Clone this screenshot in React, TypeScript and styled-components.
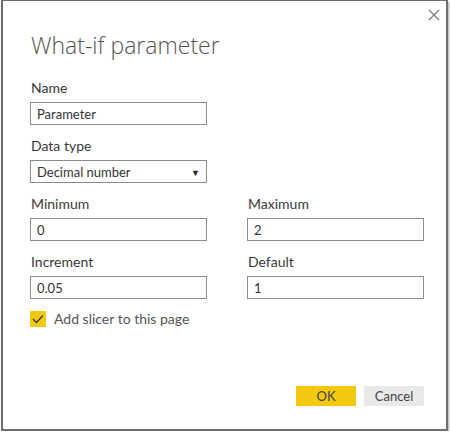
import styled, { createGlobalStyle } from 'styled-components'

const GlobalStyle = createGlobalStyle`
  html, body {
    margin: 0;
    padding: 0;
    background: #ffffff;
  }
  body {
    font-family: "Segoe UI", Lato, "Liberation Sans", sans-serif;
    color: #333333;
  }
`

type FieldProps = {
  label: string
  value: string
}

const Field = ({ label, value }: FieldProps) => (
  <FieldWrap>
    <Label>{label}</Label>
    <TextBox>{value}</TextBox>
  </FieldWrap>
)

const App = () => {
  return (
    <>
      <GlobalStyle />
      <Dialog>
        <CloseButton aria-label="Close">
          <svg width="12" height="12" viewBox="0 0 12 12">
            <path d="M1 1 L11 11 M11 1 L1 11" stroke="#7a7a7a" strokeWidth="1.2" fill="none" />
          </svg>
        </CloseButton>
        <Title>What-if parameter</Title>

        <Narrow>
          <Field label="Name" value="Parameter" />
          <FieldWrap>
            <Label>Data type</Label>
            <SelectBox>
              <span>Decimal number</span>
              <Arrow>▼</Arrow>
            </SelectBox>
          </FieldWrap>
        </Narrow>

        <Grid>
          <Field label="Minimum" value="0" />
          <Field label="Maximum" value="2" />
          <Field label="Increment" value="0.05" />
          <Field label="Default" value="1" />
        </Grid>

        <CheckRow>
          <CheckBox>
            <svg width="12" height="10" viewBox="0 0 12 10">
              <path d="M1 5 L4.5 8.5 L11 1.5" stroke="#3a3a3a" strokeWidth="1.3" fill="none" />
            </svg>
          </CheckBox>
          <CheckLabel>Add slicer to this page</CheckLabel>
        </CheckRow>

        <Footer>
          <Button $primary>OK</Button>
          <Button>Cancel</Button>
        </Footer>
      </Dialog>
    </>
  )
}

export default App

const Dialog = styled.div`
  position: relative;
  box-sizing: border-box;
  margin-left: 1px;
  width: 447px;
  height: 431px;
  border: 2px solid #6e6e6e;
  border-top-width: 1px;
  background: #ffffff;
  box-shadow: 1px 2px 2px rgba(0, 0, 0, 0.35);
  padding: 0 0 0 27px;
  display: flex;
  flex-direction: column;
`

const CloseButton = styled.div`
  position: absolute;
  top: 8px;
  right: 6px;
  width: 12px;
  height: 12px;
  display: flex;
`

const Title = styled.h1`
  margin: 28px 0 0 1px;
  font-family: "Segoe UI Light", "Open Sans", Lato, sans-serif;
  font-weight: 300;
  font-size: 23px;
  line-height: 33px;
  color: #555555;
`

const Narrow = styled.div`
  margin-top: 16px;
  width: 177px;
  display: flex;
  flex-direction: column;
`

const FieldWrap = styled.div`
  display: flex;
  flex-direction: column;
  margin-bottom: 11px;
`

const Label = styled.div`
  font-size: 14px;
  line-height: 19px;
  color: #3a3a3a;
  margin-bottom: 5px;
  padding-left: 1px;
`

const TextBox = styled.div`
  box-sizing: border-box;
  height: 23px;
  border: 1px solid #8c8c8c;
  padding: 1px 6px 0;
  font-size: 13px;
  line-height: 21px;
  color: #333333;
`

const SelectBox = styled(TextBox)`
  display: flex;
  justify-content: space-between;
  align-items: center;
`

const Arrow = styled.span`
  font-size: 9px;
  color: #222222;
`

const Grid = styled.div`
  display: grid;
  grid-template-columns: 177px 177px;
  column-gap: 40px;
`

const CheckRow = styled.div`
  display: flex;
  align-items: center;
  gap: 8px;
`

const CheckBox = styled.div`
  width: 16px;
  height: 16px;
  background: #f2c811;
  display: flex;
  align-items: center;
  justify-content: center;
`

const CheckLabel = styled.span`
  font-size: 14px;
  color: #555555;
`

const Footer = styled.div`
  margin-top: auto;
  margin-bottom: 23px;
  margin-right: 22px;
  display: flex;
  justify-content: flex-end;
  gap: 8px;
`

const Button = styled.div<{ $primary?: boolean }>`
  width: 60px;
  height: 20px;
  display: flex;
  align-items: center;
  justify-content: center;
  font-size: 13px;
  color: #444444;
  background: ${({ $primary }) => ($primary ? '#f2c811' : '#e9e9e9')};
`
